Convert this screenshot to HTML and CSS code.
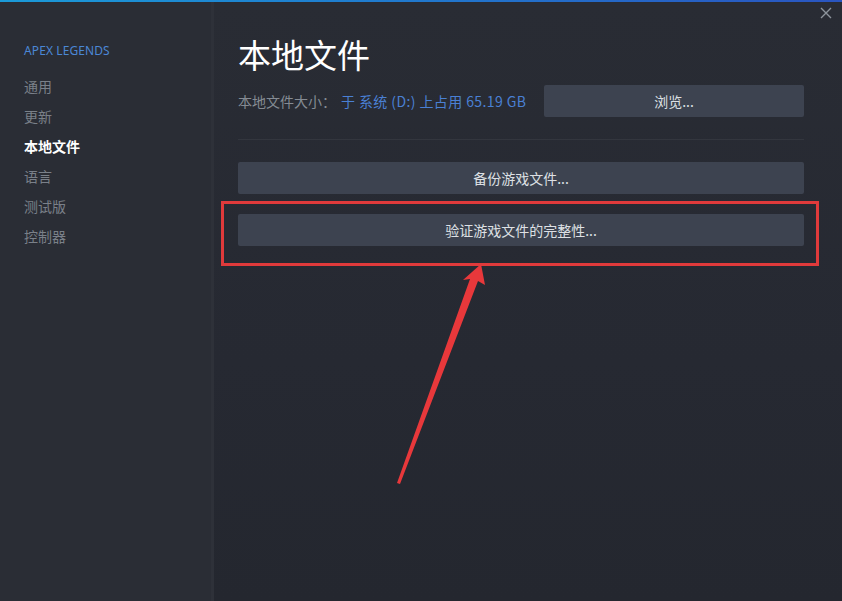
FILE: index.html
```html
<!DOCTYPE html>
<html lang="zh-CN">
<head>
<meta charset="utf-8">
<title>本地文件</title>
<link rel="stylesheet" href="styles.css">
</head>
<body>
<div class="window">
  <div class="topline"></div>
  <div class="layout">
    <nav class="sidebar">
      <div class="game">APEX LEGENDS</div>
      <ul class="menu">
        <li>通用</li>
        <li>更新</li>
        <li class="active">本地文件</li>
        <li>语言</li>
        <li>测试版</li>
        <li>控制器</li>
      </ul>
    </nav>
    <main class="content">
      <h1 class="title">本地文件</h1>
      <div class="size-row">
        <div class="size-text"><span class="label">本地文件大小：</span><span class="value">于 系统 (D:) 上占用 65.19 GB</span></div>
        <button class="btn browse">浏览...</button>
      </div>
      <div class="divider"></div>
      <div class="actions">
        <button class="btn">备份游戏文件...</button>
        <button class="btn">验证游戏文件的完整性...</button>
      </div>
    </main>
  </div>
  <div class="close">
    <svg width="12" height="12" viewBox="0 0 12 12"><path d="M1 1 L11 11 M11 1 L1 11" stroke="#8d949c" stroke-width="1.4" fill="none"/></svg>
  </div>
  <svg class="annotation" width="842" height="601" viewBox="0 0 842 601">
    <rect x="222.5" y="202.5" width="595" height="62" fill="none" stroke="#e03a3b" stroke-width="3"/>
    <polygon points="481,264 485,285 478,281 400,484 397,483 470,279 463,280" fill="#e8383b"/>
  </svg>
</div>
</body>
</html>
```
FILE: styles.css
```css
* { box-sizing: border-box; }
html, body { margin: 0; padding: 0; }
body {
  width: 842px;
  height: 601px;
  overflow: hidden;
  background: #262932;
  font-family: "Noto Sans CJK SC", "Noto Sans", sans-serif;
}
.window {
  position: relative;
  width: 842px;
  height: 601px;
  display: flex;
  flex-direction: column;
}
.topline {
  height: 2px;
  background: linear-gradient(90deg, #1b9ad8 0%, #1f7fd0 40%, #2a55c0 100%);
}
.layout {
  flex: 1;
  display: flex;
}
.sidebar {
  width: 214px;
  background: #2a2d35;
  border-right: 3px solid #2e3139;
  padding: 40px 0 0 24px;
}
.game {
  font-family: "Noto Sans", "Open Sans", sans-serif;
  font-size: 12px;
  color: #4b87d6;
  line-height: 18px;
  letter-spacing: 0.1px;
}
.menu {
  list-style: none;
  margin: 11px 0 0 0;
  padding: 0;
}
.menu li {
  font-size: 14px;
  line-height: 30px;
  height: 30px;
  color: #7a8089;
}
.menu li.active {
  color: #ffffff;
  font-weight: 700;
}
.content {
  flex: 1;
  padding: 0 38px 0 24px;
  background: linear-gradient(180deg, #292c34 0%, #262932 60%, #24272f 100%);
}
.title {
  margin: 30px 0 0 0;
  font-size: 33px;
  font-weight: 400;
  line-height: 44px;
  color: #ffffff;
}
.size-row {
  margin-top: 9px;
  display: flex;
  align-items: center;
  justify-content: space-between;
}
.size-text {
  font-size: 14px;
  line-height: 20px;
}
.label { color: #858b93; margin-right: 5px; }
.value { color: #4a80d4; letter-spacing: 0.4px; }
.btn {
  display: block;
  border: none;
  border-radius: 2px;
  background: #3d4350;
  color: #dde0e4;
  font-family: "Noto Sans CJK SC", "Noto Sans", sans-serif;
  font-size: 14px;
  height: 32px;
  padding: 0;
  text-align: center;
}
.browse { width: 260px; }
.divider {
  height: 1px;
  background: #33363e;
  margin-top: 22px;
}
.actions {
  margin-top: 22px;
  display: flex;
  flex-direction: column;
  gap: 20px;
}
.actions .btn { width: 100%; }
.close {
  position: absolute;
  top: 7px;
  right: 10px;
  width: 12px;
  height: 12px;
  display: flex;
}
.annotation {
  position: absolute;
  left: 0;
  top: 0;
  pointer-events: none;
}
```
